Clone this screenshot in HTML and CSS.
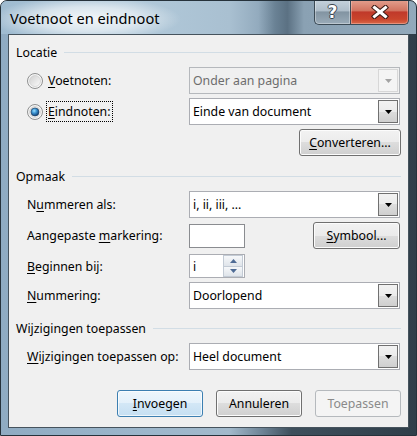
FILE: index.html
```html
<!DOCTYPE html>
<html>
<head>
<meta charset="utf-8">
<link rel="stylesheet" href="styles.css">
</head>
<body>
<div class="window">
  <div class="titlebar">
    <div class="title">Voetnoot en eindnoot</div>
    <div class="caption-buttons">
      <div class="cap help"><span>?</span></div>
      <div class="cap close">
        <svg width="18" height="14" viewBox="0 0 18 14">
          <path d="M3.5 2.5 L14.5 11.5 M14.5 2.5 L3.5 11.5" stroke="#3a1a14" stroke-width="5" stroke-linecap="square" fill="none"/>
          <path d="M3.5 2.5 L14.5 11.5 M14.5 2.5 L3.5 11.5" stroke="#ffffff" stroke-width="3" stroke-linecap="square" fill="none"/>
        </svg>
      </div>
    </div>
  </div>
  <div class="client">
    <div class="group-header"><span>Locatie</span><i class="rule"></i></div>

    <div class="row first">
      <div class="radio-label">
        <svg class="radio" width="16" height="16" viewBox="0 0 16 16">
          <defs>
            <linearGradient id="ra" x1="0" y1="0" x2="1" y2="1">
              <stop offset="0" stop-color="#cfcfcf"/>
              <stop offset="1" stop-color="#fbfbfb"/>
            </linearGradient>
          </defs>
          <circle cx="8" cy="8" r="7.5" fill="#f6f6f6" stroke="#8f9090"/>
          <circle cx="8" cy="8" r="5.5" fill="url(#ra)" stroke="#c8c8c8" stroke-width="0.6"/>
        </svg>
        <span class="txt"><u>V</u>oetnoten:</span>
      </div>
      <div class="combo disabled"><span class="value">Onder aan pagina</span><span class="drop"><svg width="7" height="4" viewBox="0 0 7 4"><path d="M0 0 H7 L3.5 4 Z" fill="#a3a3a3"/></svg></span></div>
    </div>

    <div class="row tight">
      <div class="radio-label">
        <svg class="radio" width="16" height="16" viewBox="0 0 16 16">
          <defs>
            <linearGradient id="rb" x1="0" y1="0" x2="1" y2="1">
              <stop offset="0" stop-color="#cfcfcf"/>
              <stop offset="1" stop-color="#fbfbfb"/>
            </linearGradient>
            <radialGradient id="rc" cx="0.4" cy="0.35" r="0.65">
              <stop offset="0" stop-color="#9be0ff"/>
              <stop offset="0.45" stop-color="#3d95d3"/>
              <stop offset="1" stop-color="#123f73"/>
            </radialGradient>
          </defs>
          <circle cx="8" cy="8" r="7.5" fill="#f6f6f6" stroke="#8f9090"/>
          <circle cx="8" cy="8" r="5.5" fill="url(#rb)" stroke="#c8c8c8" stroke-width="0.6"/>
          <circle cx="8" cy="8" r="4" fill="url(#rc)" stroke="#1c3f63" stroke-width="0.6"/>
        </svg>
        <span class="txt focus"><u>E</u>indnoten:</span>
      </div>
      <div class="combo"><span class="value">Einde van document</span><span class="drop"><svg width="7" height="4" viewBox="0 0 7 4"><path d="M0 0 H7 L3.5 4 Z" fill="#000"/></svg></span></div>
    </div>

    <div class="btn-row tight">
      <div class="btn conv"><u>C</u>onverteren...</div>
    </div>

    <div class="group-header sec"><span>Opmaak</span><i class="rule"></i></div>

    <div class="row first">
      <span class="label">N<u>u</u>mmeren als:</span>
      <div class="combo"><span class="value">i, ii, iii, ...</span><span class="drop"><svg width="7" height="4" viewBox="0 0 7 4"><path d="M0 0 H7 L3.5 4 Z" fill="#000"/></svg></span></div>
    </div>

    <div class="row tight">
      <span class="label">Aangepaste <u>m</u>arkering:</span>
      <div class="split">
        <div class="edit small"></div>
        <div class="btn sym"><u>S</u>ymbool...</div>
      </div>
    </div>

    <div class="row mid">
      <span class="label"><u>B</u>eginnen bij:</span>
      <div class="spin">
        <span class="value">i</span>
        <span class="spin-btns">
          <span class="sb up"><svg width="7" height="4" viewBox="0 0 7 4"><path d="M0 4 H7 L3.5 0 Z" fill="#4e6b95"/></svg></span>
          <span class="sb down"><svg width="7" height="4" viewBox="0 0 7 4"><path d="M0 0 H7 L3.5 4 Z" fill="#4e6b95"/></svg></span>
        </span>
      </div>
    </div>

    <div class="row tight">
      <span class="label"><u>N</u>ummering:</span>
      <div class="combo"><span class="value">Doorlopend</span><span class="drop"><svg width="7" height="4" viewBox="0 0 7 4"><path d="M0 0 H7 L3.5 4 Z" fill="#000"/></svg></span></div>
    </div>

    <div class="group-header sec3"><span>Wijzigingen toepassen</span><i class="rule"></i></div>

    <div class="row first">
      <span class="label"><u>W</u>ijzigingen toepassen op:</span>
      <div class="combo"><span class="value">Heel document</span><span class="drop"><svg width="7" height="4" viewBox="0 0 7 4"><path d="M0 0 H7 L3.5 4 Z" fill="#000"/></svg></span></div>
    </div>

    <div class="actions">
      <div class="btn default"><u>I</u>nvoegen</div>
      <div class="btn">Annuleren</div>
      <div class="btn disabled">Toepassen</div>
    </div>
  </div>
  <div class="bottom-frame"></div>
</div>
</body>
</html>
```

FILE: styles.css
```css
html, body {
  margin: 0;
  padding: 0;
}
body {
  width: 417px;
  height: 436px;
  overflow: hidden;
  background: #ffffff;
  font-family: "Noto Sans", "Open Sans", sans-serif;
  font-size: 12.3px;
  color: #000;
}
.window {
  width: 417px;
  height: 436px;
  box-sizing: border-box;
  border: 1px solid #26323b;
  border-radius: 7px 7px 0 0;
  background: linear-gradient(to right, #8fabc2 0%, #9cb6cb 35%, #a2b9cb 55%, #6d8395 63%, #3e4f5c 70%, #2f3e49 100%);
  display: flex;
  flex-direction: column;
  overflow: hidden;
}
.titlebar {
  height: 33px;
  flex: none;
  display: flex;
  align-items: flex-start;
  justify-content: space-between;
  background:
    radial-gradient(ellipse 95px 22px at 85px 18px, rgba(255,255,255,0.85) 0%, rgba(255,255,255,0.55) 55%, rgba(255,255,255,0) 100%),
    linear-gradient(to right, #9fbbd0 0%, #b2cadb 30%, #a9c0d1 55%, #93abbe 62%, #6a8295 66%, #5b7183 69%, #8aa1b3 73%, #92a9bb 100%);
}
.title {
  margin: 8px 0 0 9px;
  font-size: 14.6px;
  line-height: 18px;
  color: #000;
}
.caption-buttons {
  display: flex;
  margin-right: 7px;
  margin-top: -1px;
}
.cap {
  height: 25px;
  box-sizing: border-box;
  border: 1px solid #3b4a55;
  border-top: none;
  display: flex;
  align-items: center;
  justify-content: center;
}
.help {
  width: 36px;
  border-radius: 0 0 0 5px;
  border-right: none;
  background: linear-gradient(#c5d2dc 0%, #aebdc9 45%, #8294a2 50%, #9aabb8 100%);
  box-shadow: inset 0 0 0 1px rgba(255,255,255,0.35);
}
.help span {
  font-family: "DejaVu Sans", sans-serif;
  font-weight: bold;
  font-size: 17px;
  line-height: 17px;
  color: #fff;
  text-shadow: 1px 0 0 #3c4650, -1px 0 0 #3c4650, 0 1px 0 #3c4650, 0 -1px 0 #3c4650;
}
.close {
  width: 59px;
  border-radius: 0 0 5px 0;
  background: linear-gradient(#e3a08f 0%, #d1735f 45%, #c0392a 50%, #c9452c 80%, #d9694a 100%);
  box-shadow: inset 0 0 0 1px rgba(255,210,200,0.4);
}
.client {
  flex: 1;
  margin: 0 7px;
  border: 1px solid #46535d;
  background: #f0f0f0;
  padding: 9px 7px 0 7px;
  display: flex;
  flex-direction: column;
}
.bottom-frame {
  height: 7px;
  flex: none;
}
.group-header {
  display: flex;
  align-items: center;
  height: 16px;
  gap: 7px;
  flex: none;
}
.group-header .rule {
  flex: 1;
  height: 1px;
  background: #d2dde5;
}
.group-header.sec { margin-top: 12px; }
.group-header.sec3 { margin-top: 11px; }
.row {
  display: grid;
  grid-template-columns: 162px 211px;
  margin-left: 11px;
  align-items: center;
  flex: none;
}
.row.first { margin-top: 7px; }
.row.tight { margin-top: 4px; }
.row.mid { margin-top: 5px; }
.radio-label {
  display: flex;
  align-items: center;
  gap: 5px;
}
.radio { display: block; flex: none; }
.txt.focus {
  outline: 1px dotted #000;
  outline-offset: 1px;
}
u {
  text-decoration: underline;
  text-underline-offset: 2px;
}
.combo {
  height: 27px;
  box-sizing: border-box;
  border: 1px solid #abadb3;
  background: #fff;
  display: flex;
  align-items: stretch;
  padding-left: 3px;
}
.combo .value {
  flex: 1;
  display: flex;
  align-items: center;
}
.combo .drop {
  width: 20px;
  margin: 1px;
  box-sizing: border-box;
  border: 1px solid #707070;
  background: linear-gradient(#f2f2f2 0%, #ebebeb 50%, #dddddd 50%, #cfcfcf 100%);
  display: flex;
  align-items: center;
  justify-content: center;
}
.combo .drop svg { display: block; }
.combo.disabled {
  background: #f0f0f0;
  border-color: #b5b8bc;
  color: #6d6d6d;
}
.combo.disabled .drop {
  border-color: #d7d7d7;
  background: #f4f4f4;
}
.btn-row {
  display: flex;
  justify-content: flex-end;
  flex: none;
}
.btn-row.tight { margin-top: 4px; }
.btn {
  height: 27px;
  box-sizing: border-box;
  border: 1px solid #707070;
  border-radius: 3px;
  background: linear-gradient(#f2f2f2 0%, #ebebeb 50%, #dddddd 50%, #cfcfcf 100%);
  box-shadow: inset 0 0 0 1px #fcfcfc;
  display: flex;
  align-items: center;
  justify-content: center;
  width: 86px;
}
.btn.conv { width: 102px; }
.btn.sym { width: 87px; }
.split {
  display: flex;
  align-items: center;
  justify-content: space-between;
}
.edit.small {
  width: 56px;
  height: 24px;
  box-sizing: border-box;
  border: 1px solid #8a8c90;
  background: #fff;
}
.spin {
  width: 56px;
  height: 24px;
  box-sizing: border-box;
  border: 1px solid #abadb3;
  background: #fff;
  display: flex;
  align-items: stretch;
  padding-left: 3px;
}
.spin .value {
  flex: 1;
  display: flex;
  align-items: center;
}
.spin-btns {
  width: 20px;
  margin: 0 1px 0 0;
  display: flex;
  flex-direction: column;
}
.sb {
  flex: 1;
  box-sizing: border-box;
  border: 1px solid #c3cbd5;
  background: linear-gradient(#f6f8fa, #dfe4ea);
  display: flex;
  align-items: center;
  justify-content: center;
}
.sb.down { border-top: none; }
.sb svg { display: block; }
.actions {
  display: flex;
  justify-content: flex-end;
  gap: 13px;
  margin-top: 20px;
  flex: none;
}
.btn.default {
  border-color: #3c7fb1;
  background: linear-gradient(#eef6fc 0%, #e3f0fa 50%, #d3e7f6 50%, #c5dff2 100%);
  box-shadow: inset 0 0 0 1px rgba(255,255,255,0.7);
}
.btn.disabled {
  border-color: #b5b9bd;
  background: #f4f4f4;
  box-shadow: none;
  color: #8a8a8a;
}
```
